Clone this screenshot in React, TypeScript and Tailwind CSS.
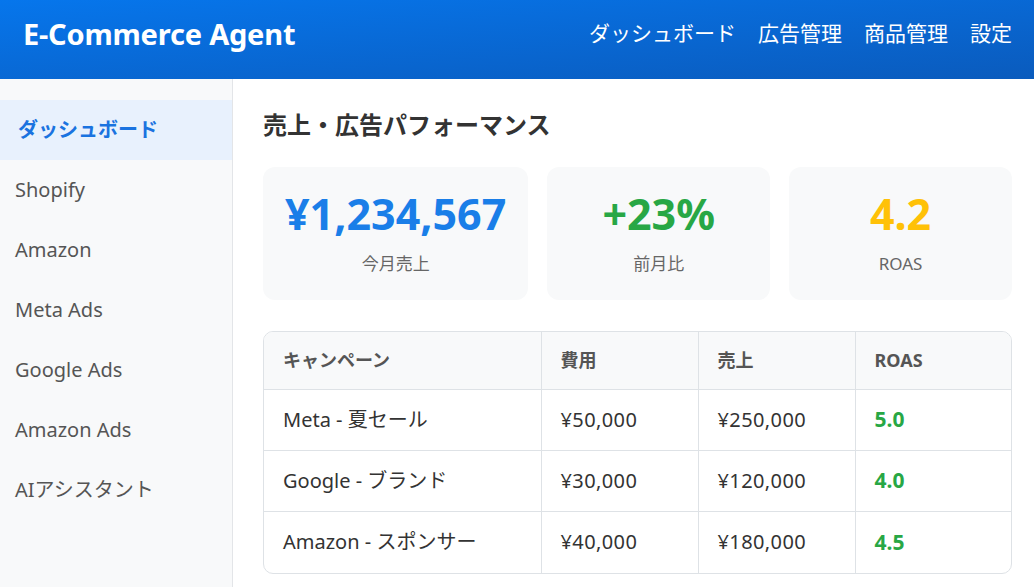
const navItems = ['ダッシュボード', '広告管理', '商品管理', '設定'];

const sideItems = [
  'ダッシュボード',
  'Shopify',
  'Amazon',
  'Meta Ads',
  'Google Ads',
  'Amazon Ads',
  'AIアシスタント',
];

const stats = [
  { value: '¥1,234,567', label: '今月売上', color: 'text-[#1a7ee8]' },
  { value: '+23%', label: '前月比', color: 'text-[#28a745]' },
  { value: '4.2', label: 'ROAS', color: 'text-[#ffc107]' },
];

const campaigns = [
  { name: 'Meta - 夏セール', cost: '¥50,000', sales: '¥250,000', roas: '5.0' },
  { name: 'Google - ブランド', cost: '¥30,000', sales: '¥120,000', roas: '4.0' },
  { name: 'Amazon - スポンサー', cost: '¥40,000', sales: '¥180,000', roas: '4.5' },
];

export default function App() {
  return (
    <div
      className="min-h-screen flex flex-col bg-white text-[#333]"
      style={{ fontFamily: '"Noto Sans", "Noto Sans CJK JP", sans-serif' }}
    >
      {/* Header */}
      <header className="h-[79px] flex items-center justify-between pl-[23px] pr-[22px] pb-[12px] bg-gradient-to-br from-[#0676ec] to-[#0a5bbd] text-white">
        <h1 className="text-[29px] font-bold tracking-[-0.2px]">E-Commerce Agent</h1>
        <nav className="flex items-center gap-[22px] text-[21px]">
          {navItems.map((item) => (
            <span key={item}>{item}</span>
          ))}
        </nav>
      </header>

      <div className="flex flex-1">
        {/* Sidebar */}
        <aside className="w-[233px] shrink-0 bg-[#f8f9fa] border-r border-[#e3e5e8] pt-[21px]">
          {sideItems.map((item, i) => (
            <div
              key={item}
              className={`h-[60px] flex items-center pl-[15px] text-[20px] ${
                i === 0
                  ? 'bg-[#e8f1fd] text-[#1a73e0] font-bold pl-[18px]'
                  : 'text-[#555]'
              }`}
            >
              {item}
            </div>
          ))}
        </aside>

        {/* Main */}
        <main className="flex-1 pl-[30px] pr-[22px] pt-[29px]">
          <h2 className="text-[24px] font-bold text-[#333] leading-[1.4]">売上・広告パフォーマンス</h2>

          <div className="flex gap-[19px] mt-[25px]">
            {stats.map((s) => (
              <div
                key={s.label}
                className="flex-1 h-[133px] rounded-[12px] bg-[#f8f9fa] flex flex-col items-center justify-center px-[22px] pt-[2px]"
              >
                <div className={`text-[43px] font-bold leading-none ${s.color}`}>{s.value}</div>
                <div className="text-[17px] text-[#666] mt-[16px]">{s.label}</div>
              </div>
            ))}
          </div>

          <div className="mt-[31px] border border-[#dee2e6] rounded-[10px] overflow-hidden">
            <table className="w-full border-collapse">
              <thead>
                <tr className="bg-[#f8f9fa] h-[58px] text-left text-[18px] font-bold text-[#555]">
                  <th className="w-[277px] pl-[19px] font-bold">キャンペーン</th>
                  <th className="w-[157px] pl-[19px] border-l border-[#dee2e6] font-bold">費用</th>
                  <th className="w-[157px] pl-[19px] border-l border-[#dee2e6] font-bold">売上</th>
                  <th className="pl-[19px] border-l border-[#dee2e6] font-bold">ROAS</th>
                </tr>
              </thead>
              <tbody>
                {campaigns.map((c) => (
                  <tr key={c.name} className="h-[61px] border-t border-[#dee2e6] text-[20px] text-[#333]">
                    <td className="pl-[19px]">{c.name}</td>
                    <td className="pl-[19px] border-l border-[#dee2e6] tracking-[0.4px]">{c.cost}</td>
                    <td className="pl-[19px] border-l border-[#dee2e6] tracking-[0.4px]">{c.sales}</td>
                    <td className="pl-[19px] border-l border-[#dee2e6] text-[21px] font-bold text-[#28a745]">{c.roas}</td>
                  </tr>
                ))}
              </tbody>
            </table>
          </div>
        </main>
      </div>
    </div>
  );
}
